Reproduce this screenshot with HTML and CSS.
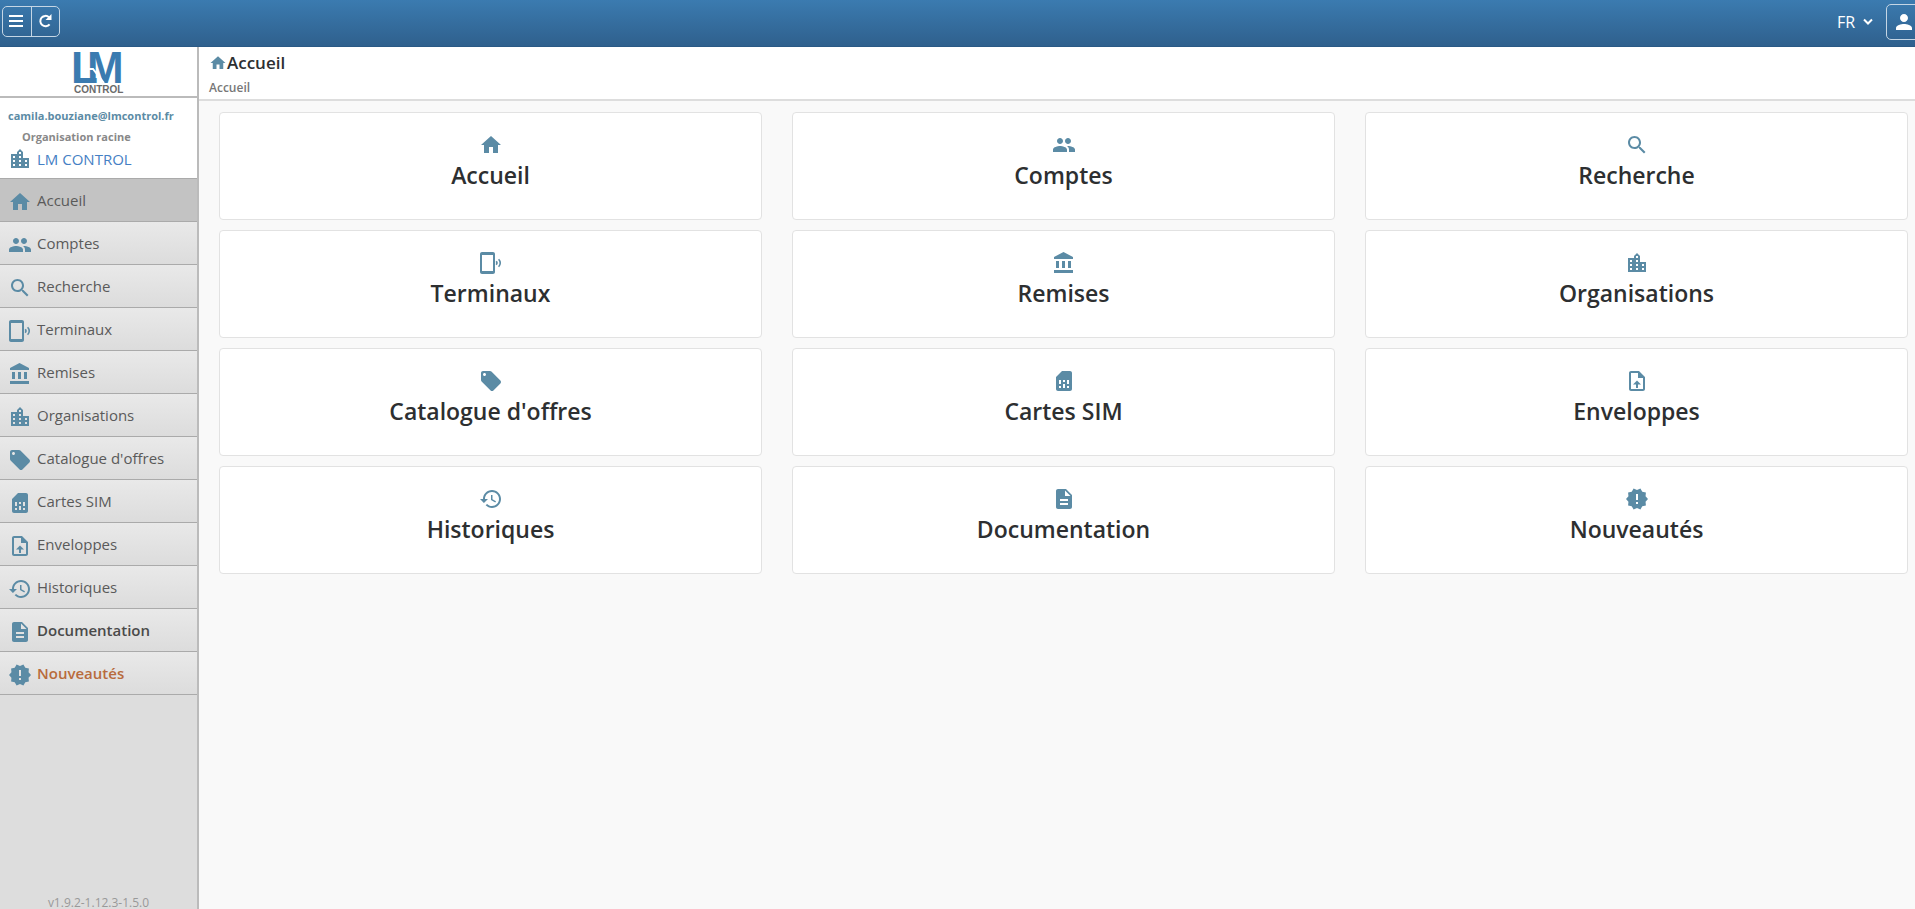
FILE: index.html
```html
<!DOCTYPE html>
<html lang="fr">
<head>
    <meta charset="UTF-8">
    <meta name="viewport" content="width=device-width, initial-scale=1.0">
    <title>Accueil - LM Control</title>
    <link rel="stylesheet" href="styles.css">
</head>
<body>
    <!-- Icons -->
    <svg class="sprite" aria-hidden="true">
        <symbol id="home" viewBox="0 0 24 24"><path d="M10 20v-6h4v6h5v-8h3L12 3 2 12h3v8z"/></symbol>
        <symbol id="people" viewBox="0 0 24 24"><path d="M16 11c1.66 0 2.99-1.34 2.99-3S17.66 5 16 5s-3 1.34-3 3 1.34 3 3 3zm-8 0c1.66 0 2.99-1.34 2.99-3S9.66 5 8 5 5 6.34 5 8s1.34 3 3 3zm0 2c-2.33 0-7 1.17-7 3.5V19h14v-2.500c0-2.330-4.670-3.500-7-3.500zm8 0c-.29 0-.62.02-.97.05 1.160.84 1.970 1.970 1.970 3.450V19h6v-2.500c0-2.330-4.670-3.500-7-3.500z"/></symbol>
        <symbol id="search" viewBox="0 0 24 24"><path d="M15.500 14h-.79l-.28-.27C15.410 12.590 16 11.110 16 9.500 16 5.910 13.090 3 9.500 3S3 5.910 3 9.500 5.910 16 9.500 16c1.610 0 3.090-.59 4.230-1.570l.27.28v.79l5 4.990L20.490 19l-4.990-5zm-6 0C7.010 14 5 11.990 5 9.500S7.010 5 9.500 5 14 7.010 14 9.500 11.990 14 9.500 14z"/></symbol>
        <symbol id="terminal" viewBox="0 0 24 24"><path fill-rule="evenodd" d="M3 1h11c1.100 0 2 .9 2 2v18c0 1.100-.9 2-2 2H3c-1.100 0-2-.9-2-2V3c0-1.100.9-2 2-2zm0 3v16h11V4z"/><path d="M17.200 10.300c.9 1 .9 2.400 0 3.400M19.600 8.300c2.200 2.200 2.200 5.200 0 7.400" fill="none" stroke="currentColor" stroke-width="1.600"/></symbol>
        <symbol id="bank" viewBox="0 0 24 24"><path d="M4 10v7h3v-7H4zm6 0v7h3v-7h-3zM2 22h19v-3H2v3zm14-12v7h3v-7h-3zm-4.500-9L2 6v2h19V6l-9.500-5z"/></symbol>
        <symbol id="city" viewBox="0 0 24 24"><path d="M15 11V5l-3-3-3 3v2H3v14h18V11h-6zm-8 8H5v-2h2v2zm0-4H5v-2h2v2zm0-4H5V9h2v2zm6 8h-2v-2h2v2zm0-4h-2v-2h2v2zm0-4h-2V9h2v2zm0-4h-2V5h2v2zm6 12h-2v-2h2v2zm0-4h-2v-2h2v2z"/></symbol>
        <symbol id="tag" viewBox="0 0 24 24"><path d="M21.410 11.580l-9-9C12.050 2.220 11.550 2 11 2H4c-1.100 0-2 .9-2 2v7c0 .55.22 1.050.59 1.420l9 9c.36.36.86.58 1.410.58.55 0 1.050-.22 1.410-.59l7-7c.37-.36.59-.86.59-1.410 0-.55-.23-1.060-.59-1.420zM5.500 7C4.670 7 4 6.330 4 5.500S4.670 4 5.500 4 7 4.670 7 5.500 6.330 7 5.500 7z"/></symbol>
        <symbol id="sim" viewBox="0 0 24 24"><path d="M18 2h-8L4 8v12c0 1.100.9 2 2 2h12c1.100 0 2-.9 2-2V4c0-1.100-.9-2-2-2zM9 19H7v-2h2v2zm8 0h-2v-2h2v2zm-8-4H7v-4h2v4zm4 4h-2v-4h2v4zm0-6h-2v-2h2v2zm4 2h-2v-4h2v4z"/></symbol>
        <symbol id="envelope" viewBox="0 0 24 24"><path fill-rule="evenodd" d="M6 2h8l6 6v12c0 1.100-.9 2-2 2H6c-1.100 0-2-.9-2-2V4c0-1.100.9-2 2-2zm0 2v16h12V9h-5V4z"/><path d="M8 15.500l4-4 4 4h-3V19h-2v-3.500z"/></symbol>
        <symbol id="history" viewBox="0 0 24 24"><path d="M13 3c-4.970 0-9 4.030-9 9H1l3.890 3.890.07.14L9 12H6c0-3.870 3.130-7 7-7s7 3.130 7 7-3.130 7-7 7c-1.930 0-3.680-.79-4.940-2.060l-1.420 1.420C8.270 19.990 10.510 21 13 21c4.970 0 9-4.030 9-9s-4.030-9-9-9zm-1 5v5l4.280 2.540.72-1.210-3.500-2.080V8H12z"/></symbol>
        <symbol id="document" viewBox="0 0 24 24"><path d="M14 2H6c-1.100 0-1.990.9-1.990 2L4 20c0 1.100.89 2 1.990 2H18c1.100 0 2-.9 2-2V8l-6-6zm2 16H8v-2h8v2zm0-4H8v-2h8v2zm-3-5V3.500L18.500 9H13z"/></symbol>
        <symbol id="news" viewBox="0 0 24 24"><path d="M23 12l-2.440-2.780.34-3.680-3.610-.82-1.890-3.180L12 3 8.600 1.540 6.710 4.720l-3.610.81.34 3.680L1 12l2.440 2.780-.34 3.690 3.610.82 1.890 3.180L12 21l3.400 1.460 1.890-3.180 3.610-.82-.34-3.680L23 12zm-10 5h-2v-2h2v2zm0-4h-2V7h2v6z"/></symbol>
        <symbol id="user" viewBox="0 0 24 24"><path d="M12 12c2.210 0 4-1.790 4-4s-1.790-4-4-4-4 1.790-4 4 1.790 4 4 4zm0 2c-2.670 0-8 1.340-8 4v2h16v-2c0-2.660-5.330-4-8-4z"/></symbol>
    </svg>

    <header class="topbar">
        <div class="btn-group">
            <button type="button" aria-label="Menu">
                <svg width="16" height="16" viewBox="0 0 16 16"><path d="M1 3h14M1 8h14M1 13h14" fill="none" stroke="currentColor" stroke-width="2"/></svg>
            </button>
            <button type="button" aria-label="Actualiser">
                <svg width="16" height="16" viewBox="0 0 16 16"><path d="M12.600 11.300A5.200 5.200 0 1 1 12 4.200" fill="none" stroke="currentColor" stroke-width="2"/><path d="M14.500 1v6h-6z"/></svg>
            </button>
        </div>
        <div class="topbar-right">
            <div class="lang">
                <select aria-label="Langue">
                    <option>FR</option>
                    <option>EN</option>
                </select>
                <svg width="10" height="8" viewBox="0 0 10 8"><path d="M1 1.500l4 4 4-4" fill="none" stroke="currentColor" stroke-width="2"/></svg>
            </div>
            <button type="button" class="user-btn" aria-label="Mon compte"><svg class="icon"><use href="#user"/></svg></button>
        </div>
    </header>

    <div class="layout">
        <aside class="sidebar">
            <a class="logo" href="#" aria-label="LM Control">
                <svg width="50" height="44" viewBox="0 0 50 44">
                    <g class="logo-mark">
                        <text x="-3" y="32">L</text>
                        <text x="13" y="32">M</text>
                    </g>
                    <path d="M13 18h6l11 14" fill="none" stroke="#fff" stroke-width="2"/>
                    <text class="logo-name" x="0" y="42">CONTROL</text>
                </svg>
            </a>

            <div class="account">
                <p class="email">camila.bouziane@lmcontrol.fr</p>
                <p class="org-label">Organisation racine</p>
                <a class="org" href="#"><svg class="icon"><use href="#city"/></svg>LM CONTROL</a>
            </div>

            <nav class="menu">
                <a class="active" href="#"><svg class="icon"><use href="#home"/></svg>Accueil</a>
                <a href="#"><svg class="icon"><use href="#people"/></svg>Comptes</a>
                <a href="#"><svg class="icon"><use href="#search"/></svg>Recherche</a>
                <a href="#"><svg class="icon"><use href="#terminal"/></svg>Terminaux</a>
                <a href="#"><svg class="icon"><use href="#bank"/></svg>Remises</a>
                <a href="#"><svg class="icon"><use href="#city"/></svg>Organisations</a>
                <a href="#"><svg class="icon"><use href="#tag"/></svg>Catalogue d'offres</a>
                <a href="#"><svg class="icon"><use href="#sim"/></svg>Cartes SIM</a>
                <a href="#"><svg class="icon"><use href="#envelope"/></svg>Enveloppes</a>
                <a href="#"><svg class="icon"><use href="#history"/></svg>Historiques</a>
                <a class="strong" href="#"><svg class="icon"><use href="#document"/></svg>Documentation</a>
                <a class="strong new" href="#"><svg class="icon"><use href="#news"/></svg>Nouveautés</a>
            </nav>

            <p class="version">v1.9.2-1.12.3-1.5.0</p>
        </aside>

        <main class="content">
            <div class="page-header">
                <h1><svg class="icon"><use href="#home"/></svg>Accueil</h1>
                <p class="breadcrumb">Accueil</p>
            </div>

            <div class="cards">
                <a class="card" href="#"><svg class="icon"><use href="#home"/></svg><h2>Accueil</h2></a>
                <a class="card" href="#"><svg class="icon"><use href="#people"/></svg><h2>Comptes</h2></a>
                <a class="card" href="#"><svg class="icon"><use href="#search"/></svg><h2>Recherche</h2></a>
                <a class="card" href="#"><svg class="icon"><use href="#terminal"/></svg><h2>Terminaux</h2></a>
                <a class="card" href="#"><svg class="icon"><use href="#bank"/></svg><h2>Remises</h2></a>
                <a class="card" href="#"><svg class="icon"><use href="#city"/></svg><h2>Organisations</h2></a>
                <a class="card" href="#"><svg class="icon"><use href="#tag"/></svg><h2>Catalogue d'offres</h2></a>
                <a class="card" href="#"><svg class="icon"><use href="#sim"/></svg><h2>Cartes SIM</h2></a>
                <a class="card" href="#"><svg class="icon"><use href="#envelope"/></svg><h2>Enveloppes</h2></a>
                <a class="card" href="#"><svg class="icon"><use href="#history"/></svg><h2>Historiques</h2></a>
                <a class="card" href="#"><svg class="icon"><use href="#document"/></svg><h2>Documentation</h2></a>
                <a class="card" href="#"><svg class="icon"><use href="#news"/></svg><h2>Nouveautés</h2></a>
            </div>
        </main>
    </div>
</body>
</html>
```

FILE: styles.css
```css
* { box-sizing: border-box; }

body {
    display: flex;
    flex-direction: column;
    min-height: 100vh;
    margin: 0;
    overflow-x: hidden;
    background: #f9f9f9;
    color: #2d2f31;
    font-family: "Segoe UI", "Open Sans", "Noto Sans", sans-serif;
    font-size: 15px;
}

h1, h2, p { margin: 0; }
a { color: inherit; text-decoration: none; }
button, select { font: inherit; color: inherit; cursor: pointer; }
svg { flex: none; fill: currentColor; }

.sprite { display: none; }
.icon { width: 24px; height: 24px; color: #5b8ba5; }

/* Top bar */
.topbar {
    display: flex;
    justify-content: space-between;
    align-items: flex-start;
    height: 47px;
    padding-left: 2px;
    overflow: hidden;
    border-bottom: 1px solid #2a5985;
    background: linear-gradient(#3b7bb0, #2f608d);
    color: #fff;
}

.btn-group {
    display: flex;
    margin-top: 6px;
    border: 1px solid #c5d6e5;
    border-radius: 5px;
}

.btn-group button {
    width: 28px;
    height: 29px;
    padding: 0 5px 2px;
    border: 0;
    background: none;
}

.btn-group button + button { border-left: 1px solid #c5d6e5; }
.btn-group svg { display: block; }

.topbar-right {
    display: flex;
    align-items: center;
    gap: 13px;
    margin: 4px -8px 0 0;
}

.lang {
    display: flex;
    align-items: center;
    gap: 5px;
}

.lang select {
    appearance: none;
    padding: 0;
    border: 0;
    background: none;
    font-size: 16px;
}

.lang option { color: #333; }

.user-btn {
    width: 37px;
    height: 36px;
    padding: 0 5px;
    border: 1px solid #c5d6e5;
    border-radius: 5px;
    background: none;
}

.user-btn .icon { display: block; color: #fff; }

/* Sidebar */
.layout { display: flex; flex: 1; }

.sidebar {
    display: flex;
    flex-direction: column;
    flex: none;
    width: 199px;
    border-right: 2px solid #bbb;
    background: #ddd;
}

.logo {
    display: flex;
    justify-content: center;
    padding: 4px 0 1px;
    border-bottom: 2px solid #bbb;
    background: #fff;
}

.logo svg { overflow: visible; }

.logo-mark {
    fill: #3b7bb0;
    font-family: "Liberation Sans", Arial, sans-serif;
    font-size: 44px;
    font-weight: bold;
}

.logo-name {
    fill: #6b6b6b;
    font-family: "Liberation Sans", Arial, sans-serif;
    font-size: 10px;
    font-weight: bold;
}

.account {
    padding: 7px 8px;
    background: #fff;
    font-size: 11px;
    font-weight: bold;
    line-height: 21px;
}

.email { color: #5b8ba5; }
.org-label { padding-left: 14px; color: #888; }

.org {
    display: flex;
    align-items: center;
    gap: 5px;
    color: #4580c4;
    font-size: 15px;
    font-weight: normal;
    line-height: 24px;
}

.menu a {
    display: flex;
    align-items: center;
    gap: 5px;
    height: 43px;
    padding: 0 8px;
    border-top: 1px solid #aaa;
    background: linear-gradient(#e9e9e9, #dcdcdc);
    color: #5a5a5a;
}

.menu a:last-child { height: 44px; border-bottom: 1px solid #aaa; }
.menu .icon { margin-top: 3px; }
.menu .active { background: #c3c3c3; }
.menu .strong { color: #4a4a4a; font-weight: 600; }
.menu .new { color: #b86b3c; }

.version {
    margin-top: auto;
    color: #999;
    font-size: 12px;
    line-height: 12px;
    text-align: center;
}

/* Content */
.content { flex: 1; min-width: 0; }

.page-header {
    padding: 4px 10px 1px;
    border-bottom: 2px solid #ddd;
    background: #fff;
}

.page-header h1 {
    display: flex;
    align-items: center;
    font-size: 17px;
    font-weight: 600;
    line-height: 24px;
}

.page-header .icon { width: 18px; height: 18px; }

.breadcrumb {
    padding-top: 3px;
    color: #777;
    font-size: 12px;
    font-weight: 600;
    line-height: 20px;
}

.cards {
    display: grid;
    grid-template-columns: repeat(3, 1fr);
    gap: 10px 30px;
    padding: 11px 7px 12px 20px;
}

.card {
    display: flex;
    flex-direction: column;
    align-items: center;
    height: 108px;
    padding-top: 20px;
    border: 1px solid #e2e2e2;
    border-radius: 4px;
    background: #fff;
}

.card h2 {
    font-size: 23px;
    font-weight: 600;
    line-height: 36px;
}
```
